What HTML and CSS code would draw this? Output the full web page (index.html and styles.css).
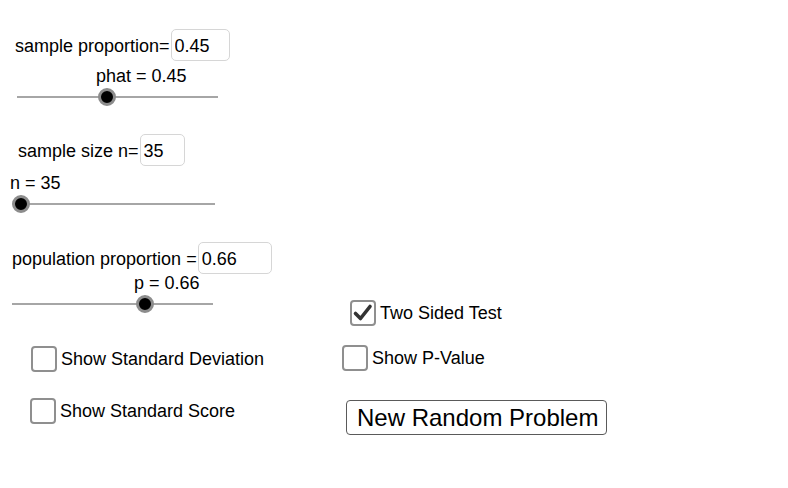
FILE: index.html
```html
<!DOCTYPE html>
<html>
<head>
<meta charset="utf-8">
<link rel="stylesheet" href="styles.css">
</head>
<body>
<div class="applet">
  <div class="field field-prop">
    <span class="field-label">sample proportion=</span>
    <input class="field-input w58" type="text" value="0.45">
  </div>
  <div class="slider-caption cap-phat">phat = 0.45</div>
  <div class="slider slider-phat"><span class="track"></span><span class="thumb" style="left: 90px"></span></div>

  <div class="field field-size">
    <span class="field-label">sample size n=</span>
    <input class="field-input w44" type="text" value="35">
  </div>
  <div class="slider-caption cap-n">n = 35</div>
  <div class="slider slider-n"><span class="track"></span><span class="thumb" style="left: 8px"></span></div>

  <div class="field field-pop">
    <span class="field-label">population proportion =</span>
    <input class="field-input w73" type="text" value="0.66">
  </div>
  <div class="slider-caption cap-p">p = 0.66</div>
  <div class="slider slider-p"><span class="track"></span><span class="thumb" style="left: 133px"></span></div>

  <label class="check chk-two">
    <span class="box checked"><svg viewBox="0 0 26 26" width="26" height="26"><path d="M5.5 13.5 L10.5 18.5 L20 6.5" fill="none" stroke="#333" stroke-width="3.6" stroke-linecap="round" stroke-linejoin="round"/></svg></span>
    <span class="check-text">Two Sided Test</span>
  </label>
  <label class="check chk-pval">
    <span class="box"></span>
    <span class="check-text">Show P-Value</span>
  </label>
  <label class="check chk-sd">
    <span class="box"></span>
    <span class="check-text">Show Standard Deviation</span>
  </label>
  <label class="check chk-score">
    <span class="box"></span>
    <span class="check-text">Show Standard Score</span>
  </label>

  <button class="action-btn" type="button">New Random Problem</button>
</div>
</body>
</html>
```
FILE: styles.css
```css
* { box-sizing: border-box; }
html, body { margin: 0; padding: 0; background: #fff; }
body {
  font-family: "Liberation Sans", Arial, sans-serif;
  font-size: 18px;
  color: #000;
}
.applet {
  position: relative;
  width: 788px;
  height: 488px;
  overflow: hidden;
  background: #fff;
}

/* input fields */
.field {
  position: absolute;
  display: flex;
  align-items: baseline;
  gap: 1px;
  line-height: 20px;
}
.field-prop { left: 15px; top: 29px; }
.field-size { left: 18px; top: 134px; }
.field-pop  { left: 12px; top: 242px; }
.field-label { white-space: nowrap; }
.field-input {
  height: 32px;
  padding: 6px 3px 4px 3px;
  border: 1px solid #d6d6d6;
  border-radius: 5px;
  font: inherit;
  line-height: 20px;
  color: #000;
  background: #fff;
  outline: none;
}
.w58 { width: 59px; }
.w44 { width: 45px; }
.w73 { width: 74px; }

/* slider captions */
.slider-caption {
  position: absolute;
  line-height: 20px;
  white-space: nowrap;
}
.cap-phat { left: 96px; top: 66px; }
.cap-n { left: 10px; top: 173px; }
.cap-p { left: 134px; top: 273px; }

/* sliders */
.slider {
  position: absolute;
  height: 18px;
}
.slider-phat { left: 17px; top: 88px; width: 201px; }
.slider-n { left: 13px; top: 195px; width: 202px; }
.slider-p { left: 12px; top: 295px; width: 201px; }
.track {
  position: absolute;
  left: 0;
  right: 0;
  top: 8px;
  height: 2px;
  background: #a6a6a6;
}
.thumb {
  position: absolute;
  top: 0;
  width: 18px;
  height: 18px;
  margin-left: -9px;
  border-radius: 50%;
  background: #000;
  border: 3px solid #8c8c8c;
}

/* checkboxes */
.check {
  position: absolute;
  display: flex;
  align-items: center;
  gap: 4px;
  line-height: 20px;
  white-space: nowrap;
}
.chk-two   { left: 350px; top: 300px; }
.chk-pval  { left: 342px; top: 345px; }
.chk-sd    { left: 31px;  top: 346px; }
.chk-score { left: 30px;  top: 398px; }
.box {
  display: block;
  width: 26px;
  height: 26px;
  border: 2px solid #8f8f8f;
  border-radius: 4px;
  background: #fff;
  position: relative;
}
.box svg {
  position: absolute;
  left: -2px;
  top: -2px;
}

/* button */
.action-btn {
  position: absolute;
  left: 346px;
  top: 400px;
  width: 261px;
  height: 35px;
  padding: 3px 0 2px 10px;
  text-align: left;
  font-family: "Liberation Sans", Arial, sans-serif;
  font-size: 24px;
  line-height: 28px;
  color: #000;
  background: #fff;
  border: 1px solid #5a5a5a;
  border-radius: 4px;
}
```
